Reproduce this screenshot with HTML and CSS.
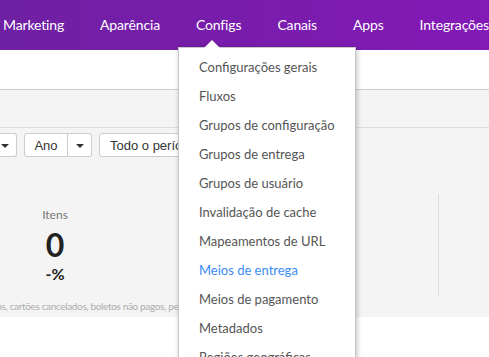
FILE: index.html
```html
<!DOCTYPE html>
<html lang="pt-BR">
<head>
    <meta charset="UTF-8">
    <meta name="viewport" content="width=device-width, initial-scale=1.0">
    <title>Painel</title>
    <link rel="stylesheet" href="styles.css">
</head>
<body>
    <div class="app">
        <!-- Top navigation -->
        <nav class="topnav">
            <ul class="menu">
                <li><a href="#">Marketing</a></li>
                <li><a href="#">Aparência</a></li>
                <li class="open">
                    <a href="#">Configs</a>
                    <div class="dropdown">
                        <ul>
                            <li><a href="#">Configurações gerais</a></li>
                            <li><a href="#">Fluxos</a></li>
                            <li><a href="#">Grupos de configuração</a></li>
                            <li><a href="#">Grupos de entrega</a></li>
                            <li><a href="#">Grupos de usuário</a></li>
                            <li><a href="#">Invalidação de cache</a></li>
                            <li><a href="#">Mapeamentos de URL</a></li>
                            <li class="active"><a href="#">Meios de entrega</a></li>
                            <li><a href="#">Meios de pagamento</a></li>
                            <li><a href="#">Metadados</a></li>
                            <li><a href="#">Regiões geográficas</a></li>
                            <li><a href="#">Usuários</a></li>
                        </ul>
                    </div>
                </li>
                <li><a href="#">Canais</a></li>
                <li><a href="#">Apps</a></li>
                <li><a href="#">Integrações</a></li>
            </ul>
        </nav>

        <header class="page-header"></header>

        <!-- Dashboard -->
        <main class="dashboard">
            <div class="tabs"></div>

            <div class="filters">
                <div class="select-group">
                    <button class="select-label">Mês</button>
                    <button class="select-caret"><span class="caret"></span></button>
                </div>
                <div class="select-group">
                    <button class="select-label">Ano</button>
                    <button class="select-caret"><span class="caret"></span></button>
                </div>
                <button class="select-label period">Todo o período</button>
            </div>

            <div class="stats">
                <div class="stat">
                    <div class="stat-title">Itens</div>
                    <div class="stat-value">0</div>
                    <div class="stat-change">-%</div>
                </div>
                <div class="stat stat-side"></div>
            </div>

            <p class="note">Não inclui pedidos, cartões cancelados, boletos não pagos, pedidos em análise</p>
        </main>
    </div>
</body>
</html>
```

FILE: styles.css
```css
body {
    margin: 0;
    font-family: 'Lato', 'Open Sans', sans-serif;
    background: #ffffff;
}
.app {
    margin-left: -66px;
    width: 760px;
    min-height: 100vh;
    overflow: hidden;
}
a {
    text-decoration: none;
    color: inherit;
}
ul {
    list-style: none;
    margin: 0;
    padding: 0;
}

/* top navigation */
.topnav {
    height: 50px;
    padding-left: 51px;
    background: linear-gradient(90deg, #6c21a0, #8c16be);
    position: relative;
    z-index: 2;
}
.menu {
    display: flex;
    height: 50px;
}
.menu > li {
    position: relative;
}
.menu > li > a {
    display: block;
    padding: 0 18px;
    line-height: 50px;
    font-size: 14px;
    letter-spacing: -0.15px;
    color: #ffffff;
}
.dropdown {
    position: absolute;
    top: 47px;
    left: 0;
    width: 176px;
    padding-top: 5px;
    background: #ffffff;
    border: 1px solid #c8c8c8;
    box-shadow: 1px 1px 5px rgba(0, 0, 0, 0.25);
}
.dropdown::before {
    content: "";
    position: absolute;
    top: -8px;
    left: 25px;
    border-left: 8px solid transparent;
    border-right: 8px solid transparent;
    border-bottom: 8px solid #ffffff;
}
.dropdown li a {
    display: block;
    padding-left: 20px;
    line-height: 29px;
    font-size: 13px;
    color: #555555;
    white-space: nowrap;
}
.dropdown li.active a {
    color: #3a8cf4;
}

/* header strip */
.page-header {
    height: 39px;
    border-bottom: 1px solid #cccccc;
}

/* dashboard */
.dashboard {
    background: #f4f4f4;
    padding-bottom: 4px;
}
.tabs {
    height: 37px;
    border-bottom: 1px solid #dddddd;
}
.filters {
    display: flex;
    gap: 7px;
    margin-top: 5px;
    padding-left: 15px;
}
.select-group {
    display: flex;
}
.select-label,
.select-caret {
    height: 24px;
    background: #ffffff;
    border: 1px solid #cccccc;
    font-family: 'Liberation Sans', Arial, sans-serif;
    font-size: 13px;
    color: #333333;
    padding: 0;
}
.select-label {
    width: 44px;
    border-radius: 3px 0 0 3px;
}
.select-caret {
    width: 24px;
    border-left: none;
    border-radius: 0 3px 3px 0;
}
.select-label.period {
    width: 130px;
    text-align: left;
    padding-left: 10px;
    border-radius: 3px;
}
.caret {
    display: inline-block;
    vertical-align: middle;
    border-top: 4px solid #333333;
    border-left: 4px solid transparent;
    border-right: 4px solid transparent;
}
.stats {
    display: flex;
    margin-top: 37px;
    padding-left: 15px;
}
.stat {
    flex-shrink: 0;
    width: 212px;
    height: 101px;
    text-align: center;
}
.stat-side {
    margin-left: 277px;
    border-left: 1px solid #dddddd;
}
.stat-title {
    padding-top: 13px;
    font-size: 12px;
    line-height: 16px;
    color: #777777;
}
.stat-value {
    margin-top: 4px;
    font-size: 32px;
    line-height: 36px;
    font-weight: 700;
    color: #222222;
}
.stat-change {
    margin-top: 1px;
    font-size: 16px;
    line-height: 20px;
    font-weight: 700;
    color: #222222;
}
.note {
    margin: 4px 0 0;
    text-indent: -3px;
    font-size: 10px;
    letter-spacing: -0.35px;
    line-height: 14px;
    color: #adadad;
    white-space: nowrap;
}
```
